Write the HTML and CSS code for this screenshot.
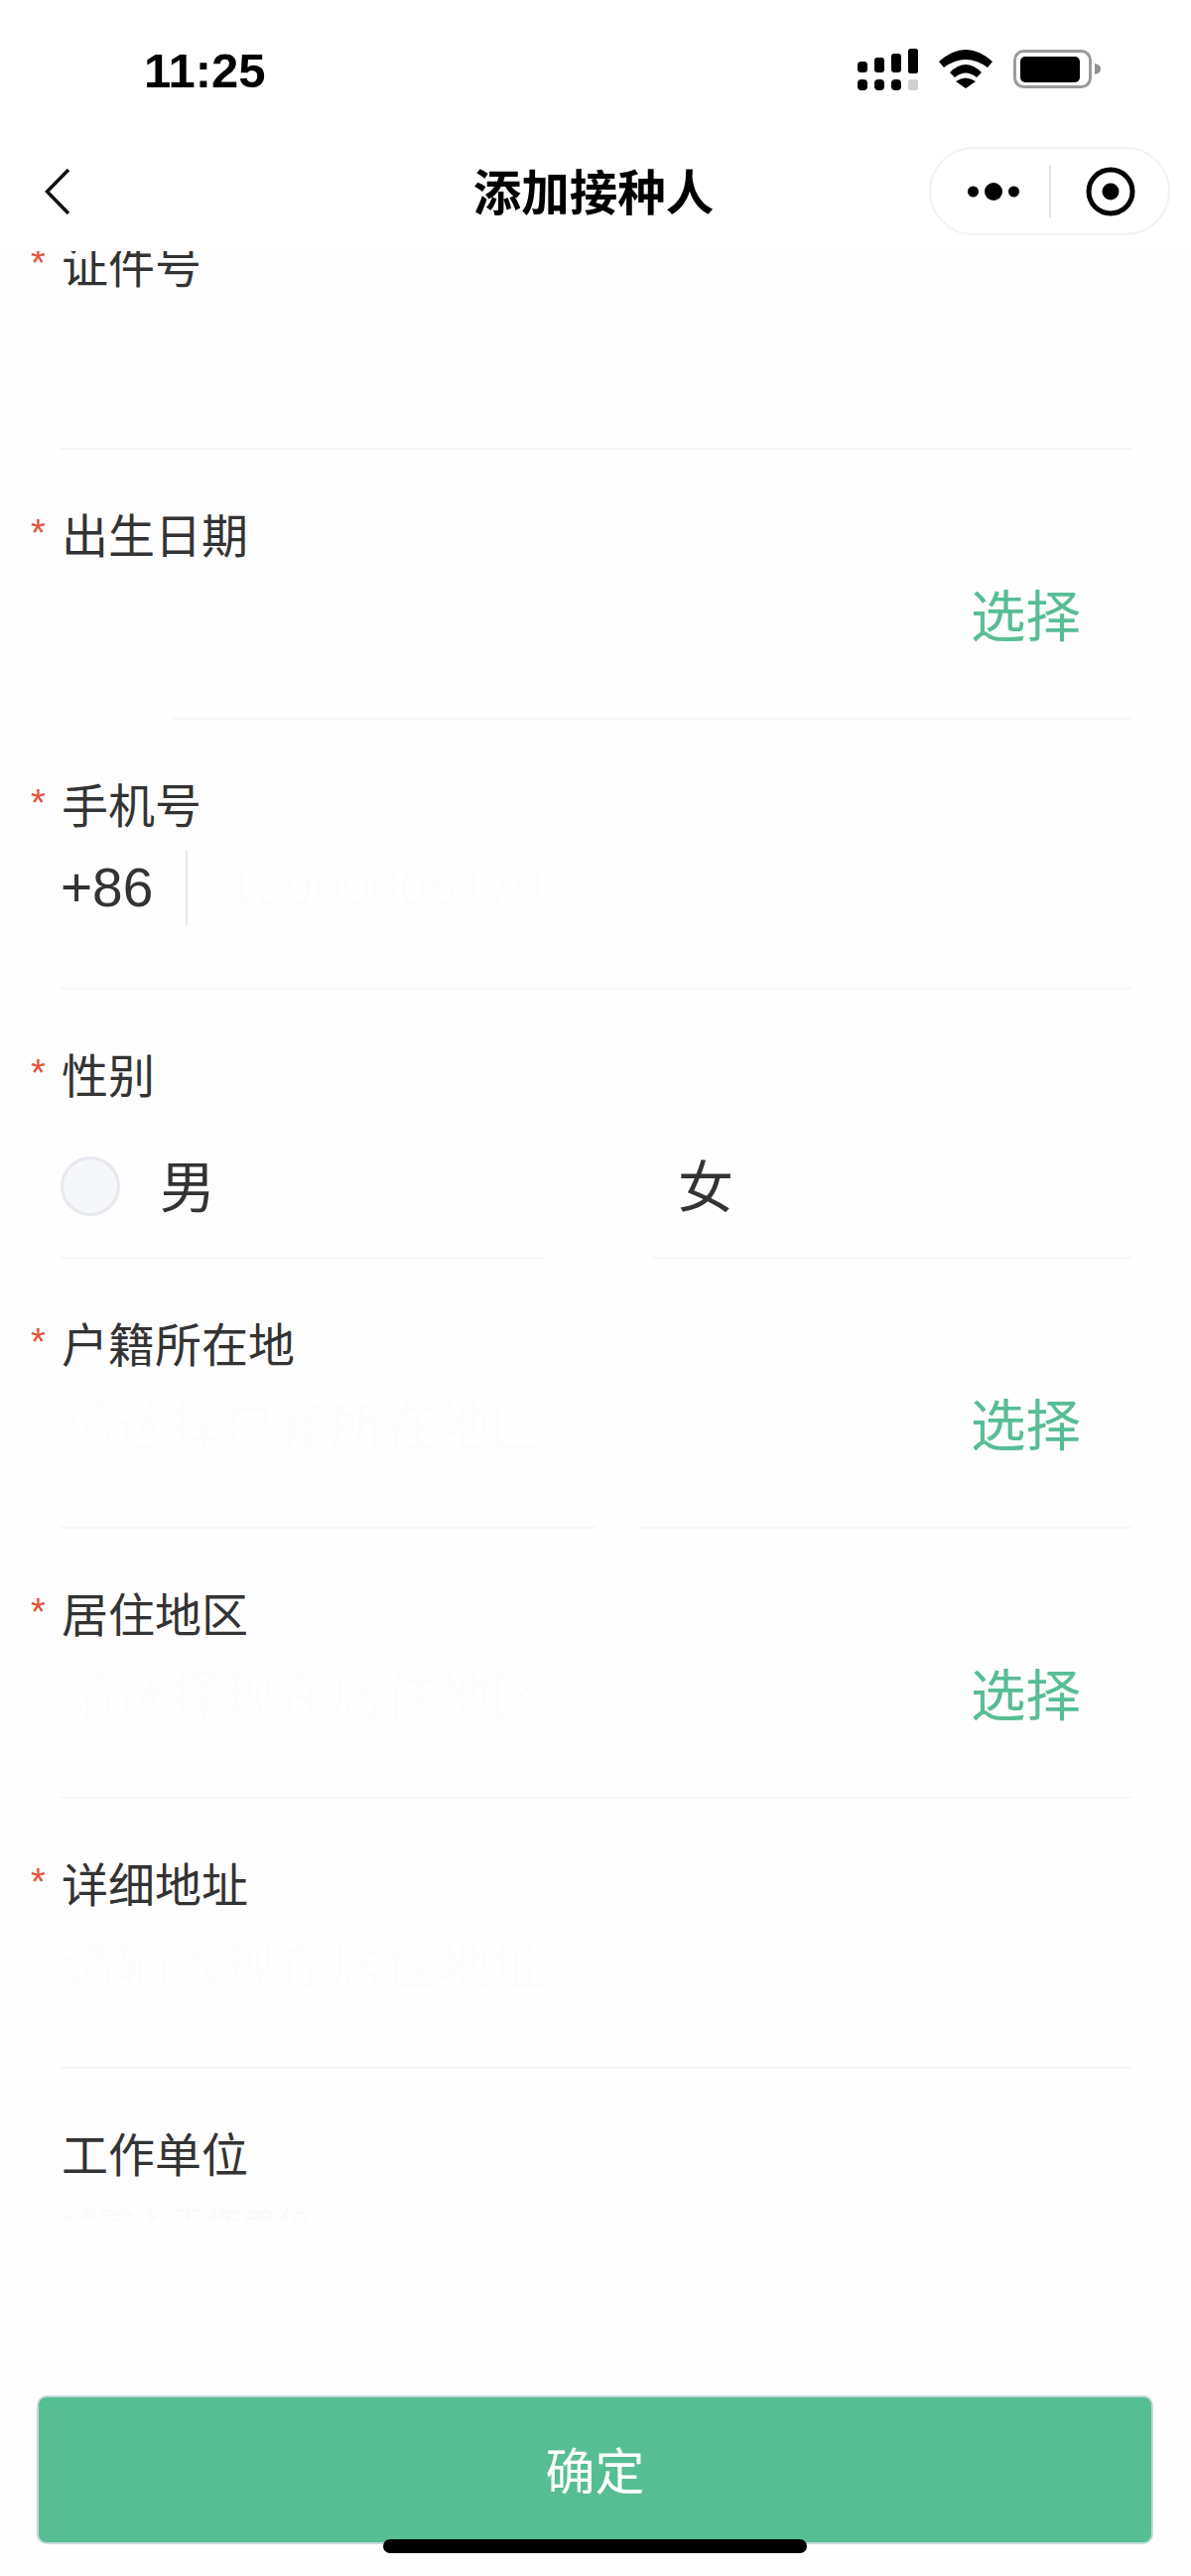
FILE: index.html
```html
<!DOCTYPE html>
<html lang="zh-CN">
<head>
<meta charset="utf-8">
<title>添加接种人</title>
<link rel="stylesheet" href="styles.css">
</head>
<body>
<div class="page">
  <header class="header">
    <div class="status">
      <span class="time">11:25</span>
      <div class="status-icons">
        <svg class="signal" width="61" height="42" viewBox="0 0 61 42">
          <rect x="0" y="13" width="10" height="11" rx="3.5"/>
          <rect x="17" y="9" width="10" height="15" rx="3"/>
          <rect x="34" y="5" width="10" height="19" rx="3"/>
          <rect x="51" y="0" width="10" height="25" rx="2.5"/>
          <rect x="0" y="31" width="10" height="11" rx="4"/>
          <rect x="17" y="31" width="10" height="11" rx="4"/>
          <rect x="34" y="31" width="10" height="11" rx="4"/>
          <rect x="51" y="31" width="10" height="11" rx="3" fill="#cfcfcf"/>
        </svg>
        <svg class="wifi" width="54" height="39" viewBox="0 0 54 39">
          <path d="M0 12Q27-12 54 12L49 18Q27 2 5 18Z"/>
          <path d="M11 23Q27 7 43 23L38 28Q27 19 16 28Z"/>
          <path d="M17 32Q27 25 37 32L27 39Z"/>
        </svg>
        <svg class="battery" width="88" height="39" viewBox="0 0 88 39">
          <rect x="1.5" y="1.5" width="76" height="36" rx="9" fill="none" stroke="#9b9b9b" stroke-width="3"/>
          <rect x="7" y="7" width="60" height="26" rx="5"/>
          <path d="M82 14C85.500 14.500 88 16.500 88 19.500S85.500 24.500 82 25Z" fill="#8f8f8f"/>
        </svg>
      </div>
    </div>
    <nav class="nav">
      <svg class="back" width="28" height="48" viewBox="0 0 28 48">
        <path d="M25 2L3.500 24L25 46" fill="none" stroke="#111" stroke-width="3.500"/>
      </svg>
      <h1 class="title">添加接种人</h1>
      <div class="capsule">
        <svg class="more" width="52" height="18" viewBox="0 0 52 18">
          <circle cx="5.500" cy="9" r="5.500"/>
          <circle cx="26" cy="9" r="9"/>
          <circle cx="46.500" cy="9" r="5.500"/>
        </svg>
        <span class="capsule-line"></span>
        <svg class="target" width="50" height="50" viewBox="0 0 50 50">
          <circle cx="25" cy="25" r="22" fill="none" stroke="#000" stroke-width="5"/>
          <circle cx="25" cy="25" r="8.500"/>
        </svg>
      </div>
    </nav>
  </header>

  <main class="form">
    <section class="row row-first">
      <label class="label required">证件号</label>
      <div class="sep"><i class="seg seg-fill"></i></div>
    </section>

    <section class="row">
      <label class="label required">出生日期</label>
      <div class="value"><span class="pick">选择</span></div>
      <div class="sep sep-inset"><i class="seg seg-fill"></i></div>
    </section>

    <section class="row">
      <label class="label required">手机号</label>
      <div class="value">
        <span class="code">+86</span>
        <span class="code-line"></span>
        <span class="ghost ghost-phone">13900005179</span>
      </div>
      <div class="sep"><i class="seg seg-fill"></i></div>
    </section>

    <section class="row">
      <label class="label required">性别</label>
      <div class="value gender">
        <span class="option option-male"><i class="radio"></i><span class="option-text">男</span></span>
        <span class="option"><span class="option-text">女</span></span>
      </div>
      <div class="sep"><i class="seg seg-a"></i><i class="seg seg-b"></i></div>
    </section>

    <section class="row">
      <label class="label required">户籍所在地</label>
      <div class="value"><span class="ghost">请选择户籍所在地区</span><span class="pick">选择</span></div>
      <div class="sep"><i class="seg seg-c"></i><i class="seg seg-d"></i></div>
    </section>

    <section class="row">
      <label class="label required">居住地区</label>
      <div class="value"><span class="ghost">请选择现在居住地区</span><span class="pick">选择</span></div>
      <div class="sep"><i class="seg seg-fill"></i></div>
    </section>

    <section class="row">
      <label class="label required">详细地址</label>
      <div class="value"><span class="ghost">请输入现在居住地址</span></div>
      <div class="sep"><i class="seg seg-fill"></i></div>
    </section>

    <section class="row">
      <label class="label">工作单位</label>
      <div class="value value-top"><span class="ghost ghost-cut">请输入工作单位</span></div>
    </section>
  </main>

  <footer class="footer">
    <button class="confirm" type="button">确定</button>
  </footer>
  <div class="home-bar"></div>
</div>
</body>
</html>
```

FILE: styles.css
```css
* { box-sizing: border-box; }

html, body {
  margin: 0;
  padding: 0;
}

body {
  background: #fefefe;
  color: #333;
  font-family: "Liberation Sans", "Noto Sans CJK SC", sans-serif;
}

.page {
  position: relative;
  display: flex;
  flex-direction: column;
  width: 1200px;
  height: 2595px;
  overflow: hidden;
}

/* header */
.header {
  flex: none;
  height: 253px;
  background: #fff;
}

.status {
  display: flex;
  align-items: flex-start;
  justify-content: space-between;
  height: 140px;
  padding: 49px 91px 0 145px;
}

.time {
  font-size: 49px;
  line-height: 44px;
  font-weight: 700;
  color: #000;
}

.status-icons {
  display: flex;
  align-items: flex-start;
  gap: 21px;
}

.signal {
  margin-top: 0;
}

.wifi, .battery {
  margin-top: 1px;
}

.nav {
  display: grid;
  grid-template-columns: 1fr auto 1fr;
  align-items: center;
  height: 105px;
  padding: 0 21px;
}

.back {
  margin-left: 23px;
}

.title {
  margin: 0;
  font-size: 48.5px;
  line-height: 60px;
  font-weight: 700;
  color: #000;
  position: relative;
  top: 2px;
  left: -2px;
}

.capsule {
  justify-self: end;
  display: flex;
  align-items: center;
  width: 243px;
  height: 89px;
  padding-left: 37px;
  background: #fff;
  border: 2px solid #f2f2f2;
  border-radius: 45px;
}

.more {
  flex: none;
  fill: #000;
}

.capsule-line {
  flex: none;
  width: 2px;
  height: 53px;
  margin-left: 30px;
  background: #e4e4e4;
}

.target {
  flex: none;
  margin-left: 35px;
  fill: #000;
}

/* form */
.form {
  flex: 1;
  min-height: 0;
  overflow: hidden;
}

.row {
  position: relative;
  display: flex;
  flex-direction: column;
  height: 271.8px;
  padding: 64px 60px 0 61px;
}

.row-first {
  margin-top: -71.8px;
}

.label {
  position: relative;
  display: block;
  padding-left: 1px;
  font-size: 47px;
  line-height: 48px;
}

.required::before {
  content: "*";
  position: absolute;
  left: -30px;
  top: -4px;
  font-size: 38px;
  line-height: 48px;
  color: #e2533a;
}

.value {
  display: flex;
  align-items: center;
  height: 76px;
  margin-top: 19px;
  padding-left: 2px;
}

.pick {
  margin-left: auto;
  margin-right: 51px;
  font-size: 55.5px;
  line-height: 76px;
  color: #57bd95;
}

.ghost {
  font-size: 54px;
  line-height: 76px;
  color: #fcfcfc;
}

.ghost-phone {
  margin-left: 40px;
  font-size: 52px;
}

.ghost-cut {
  display: block;
  height: 12px;
  overflow: hidden;
  font-size: 36px;
  line-height: 30px;
  color: #fafafa;
}

.value-top {
  align-items: flex-start;
  padding-top: 10px;
}

.code {
  width: 126px;
  margin-left: -2px;
  font-size: 55px;
  line-height: 76px;
}

.code-line {
  width: 2px;
  height: 76px;
  background: #e8e8e8;
}

.gender {
  margin-top: 50px;
}

.option {
  display: flex;
  align-items: center;
}

.option-male {
  width: 620px;
}

.radio {
  width: 60px;
  height: 60px;
  margin: -3px 40px 0 -2px;
  background: #f6f7fa;
  border: 3px solid #e7e9ee;
  border-radius: 50%;
}

.option-text {
  font-size: 56px;
  line-height: 76px;
}

.sep {
  display: flex;
  margin-top: auto;
}

.seg {
  display: block;
  height: 2px;
  background: #f6f6f6;
}

.seg-fill { flex: 1; }
.sep-inset { padding-left: 113px; }
.seg-a { width: 489px; }
.seg-b { width: 482px; margin-left: 108px; }
.seg-c { width: 539px; }
.seg-d { width: 497px; margin-left: 43px; }

/* footer */
.footer {
  flex: none;
  height: 182px;
  padding: 0 38px 32px 37px;
}

.confirm {
  display: block;
  width: 100%;
  height: 150px;
  padding: 5px 0 0;
  background: #57bd93;
  border: 2.5px solid #c6d9da;
  border-radius: 10px;
  color: #fff;
  font-family: inherit;
  font-size: 50px;
  line-height: 60px;
}

.home-bar {
  position: absolute;
  left: 386px;
  top: 2558px;
  width: 427px;
  height: 14px;
  background: #000;
  border-radius: 7px;
}
```
